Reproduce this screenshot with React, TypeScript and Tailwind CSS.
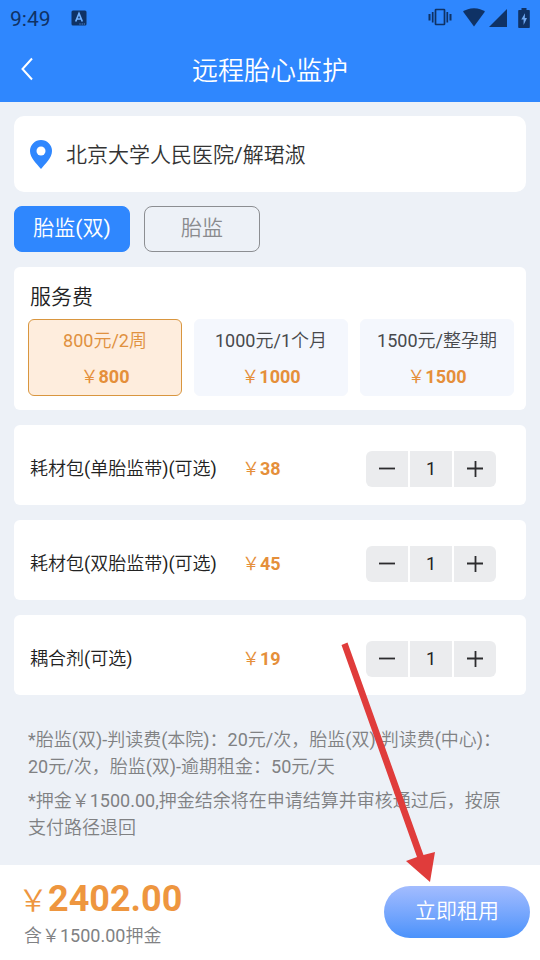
import { useState } from "react";

const PLANS = [
  { id: "two-weeks", name: "800元/2周", price: "800" },
  { id: "one-month", name: "1000元/1个月", price: "1000" },
  { id: "full-term", name: "1500元/整孕期", price: "1500" },
];

const SUPPLIES = [
  { id: "single-belt", name: "耗材包(单胎监带)(可选)", price: "38" },
  { id: "double-belt", name: "耗材包(双胎监带)(可选)", price: "45" },
  { id: "gel", name: "耦合剂(可选)", price: "19" },
];

function StatusBar() {
  return (
    <div className="flex h-9 items-center px-2.5 text-[#0f3265]">
      <span className="pt-1 text-[21px]">9:49</span>
      <svg className="ml-5 size-4" viewBox="0 0 16 16" aria-hidden="true">
        <rect x="0.5" y="0.5" width="15" height="15" rx="1.5" fill="#0f3265" />
        <path d="M4.700 11.500 8 3.500l3.300 8M5.900 9h4.200" fill="none" stroke="#6fb0ff" strokeWidth="1.7" />
        <path d="M8.500 14h1M10.700 14h1M12.800 14h1" stroke="#6fb0ff" strokeWidth="0.9" />
      </svg>
      <div className="ml-auto flex items-center">
        <svg className="h-5 w-6" viewBox="0 0 24 20" fill="none" stroke="#0f3265" aria-hidden="true">
          <rect x="7.500" y="1.500" width="9" height="15" rx="0.500" strokeWidth="1.700" />
          <path d="M4.700 4v10.500M19.300 4v10.500" strokeWidth="1.700" />
          <path d="M1.500 6v6.500M22.500 6v6.500" strokeWidth="2" />
        </svg>
        <svg className="ml-2.5 h-5 w-6" viewBox="0 0 24 20" fill="#0f3265" aria-hidden="true">
          <path d="M1 3.500C3.800 1.500 7.500 0.200 12 0.200s8.200 1.300 11 3.300L12 18.500z" />
        </svg>
        <svg className="ml-0.5 size-5" viewBox="0 0 20 20" fill="#0f3265" aria-hidden="true">
          <path d="M19 1v18H1z" />
        </svg>
        <svg className="ml-2.5 h-5 w-3" viewBox="0 0 12 20" aria-hidden="true">
          <path d="M3.500 0h5v2H11a.8.8 0 0 1 .8.8v16.400a.8.8 0 0 1-.8.8H1a.8.8 0 0 1-.8-.8V2.800A.8.8 0 0 1 1 2h2.500z" fill="#0f3265" />
          <path d="M7 5.200 3.300 11.500h2.300V17L9 10H6.800z" fill="#6fa8f0" />
        </svg>
      </div>
    </div>
  );
}

function Stepper({ label }: { label: string }) {
  const [count, setCount] = useState(1);
  const box = "flex w-[42px] items-center justify-center bg-[#ebecee]";
  return (
    <div className="ml-auto flex h-9 gap-0.5">
      <button className={`${box} rounded-l-md`} aria-label={`减少${label}`} onClick={() => setCount(Math.max(0, count - 1))}>
        <svg className="size-4" viewBox="0 0 16 16" stroke="#2c2c2e" strokeWidth="1.800" aria-hidden="true">
          <path d="M0 7.500h16" />
        </svg>
      </button>
      <input
        className="w-[42px] bg-[#ebecee] text-center text-lg text-[#222] outline-none"
        aria-label={`${label}数量`}
        inputMode="numeric"
        value={count}
        onChange={(e) => setCount(Number(e.target.value) || 0)}
      />
      <button className={`${box} rounded-r-md`} aria-label={`增加${label}`} onClick={() => setCount(count + 1)}>
        <svg className="size-4" viewBox="0 0 16 16" stroke="#2c2c2e" strokeWidth="1.800" aria-hidden="true">
          <path d="M0 7.500h16M8.500 0v16" />
        </svg>
      </button>
    </div>
  );
}

function Price({ value }: { value: string }) {
  return (
    <span className="text-lg text-[#e58f3a]">
      <span>￥</span>
      <span className="font-bold">{value}</span>
    </span>
  );
}

export default function App() {
  const [tab, setTab] = useState("double");
  const [plan, setPlan] = useState("two-weeks");
  const tabOn = "border-[#2f87fe] bg-[#2f87fe] text-white";
  const tabOff = "border-[#8c8e92] text-[#8a8b8e]";
  const planOn = "border-[#d9963f] bg-[#feeddd] text-[#e0913f]";
  const planOff = "border-[#f4f7fd] bg-[#f4f7fd] text-[#48494c]";

  return (
    <div
      lang="zh-CN"
      className="relative flex min-h-screen flex-col overflow-hidden bg-[#edf1f7] font-['Roboto','Noto_Sans_CJK_SC_DemiLight','Noto_Sans_CJK_SC_Light','Noto_Sans_CJK_SC',sans-serif] text-[#333]"
    >
      <header className="bg-[#2f87fe]">
        <StatusBar />
        <div className="grid h-[66px] grid-cols-[54px_1fr_54px] items-center">
          <button className="flex h-full items-center justify-center" aria-label="返回">
            <svg className="h-6 w-3" viewBox="0 0 12 24" fill="none" stroke="#fff" strokeWidth="2" aria-hidden="true">
              <path d="M11 1.500 1.500 12 11 22.500" />
            </svg>
          </button>
          <h1 className="pt-1 text-center text-[26px] text-white">远程胎心监护</h1>
        </div>
      </header>

      <main className="px-3.5 pt-3.5">
        <section className="flex h-[76px] items-center gap-3.5 rounded-[10px] bg-white px-4">
          <svg className="h-[29px] w-[22px]" viewBox="0 0 22 29" aria-hidden="true">
            <path d="M11 0a11 11 0 0 0-11 11c0 7 6.500 12.500 11 18 4.500-5.500 11-11 11-18A11 11 0 0 0 11 0z" fill="#2f87fe" />
            <circle cx="11" cy="11" r="4.500" fill="#fff" />
          </svg>
          <p className="pt-1 text-[21px]">北京大学人民医院/解珺淑</p>
        </section>

        <div className="mt-3.5 flex gap-3.5 text-[21px]" role="tablist">
          <button
            role="tab"
            aria-selected={tab === "double"}
            onClick={() => setTab("double")}
            className={`h-[46px] w-[116px] rounded-lg border ${tab === "double" ? tabOn : tabOff}`}
          >
            胎监(双)
          </button>
          <button
            role="tab"
            aria-selected={tab === "single"}
            onClick={() => setTab("single")}
            className={`h-[46px] w-[116px] rounded-lg border ${tab === "single" ? tabOn : tabOff}`}
          >
            胎监
          </button>
        </div>

        <section className="mt-[15px] rounded-md bg-white pt-4 pr-3 pb-3.5 pl-3.5">
          <h2 className="pl-0.5 text-[21px] leading-7 text-[#222]">服务费</h2>
          <div className="mt-2 grid grid-cols-3 gap-3">
            {PLANS.map((p) => (
              <button
                key={p.id}
                aria-pressed={plan === p.id}
                onClick={() => setPlan(p.id)}
                className={`flex h-[77px] flex-col items-center justify-center gap-2 rounded-md border pt-0.5 ${plan === p.id ? planOn : planOff}`}
              >
                <span className="text-lg">{p.name}</span>
                <Price value={p.price} />
              </button>
            ))}
          </div>
        </section>

        {SUPPLIES.map((s) => (
          <section key={s.id} className="mt-[15px] flex h-20 items-center rounded-md bg-white pt-2 pr-[30px] pl-4">
            <h3 className="w-[212px] text-lg text-[#222]">{s.name}</h3>
            <Price value={s.price} />
            <Stepper label={s.name} />
          </section>
        ))}

        <div className="space-y-[7px] px-3.5 pt-[31px] text-lg leading-[27px] text-[#808183]">
          <p>*胎监(双)-判读费(本院)：20元/次，胎监(双)-判读费(中心)：20元/次，胎监(双)-逾期租金：50元/天</p>
          <p>*押金￥1500.00,押金结余将在申请结算并审核通过后，按原支付路径退回</p>
        </div>
      </main>

      <footer className="mt-auto flex h-[95px] items-center justify-between bg-white pr-2.5 pb-0.5 pl-[18px]">
        <div className="pt-0.5">
          <p className="leading-10 text-[#ee963f]">
            <span className="text-[30px]">￥</span>
            <span className="text-4xl font-bold">2402.00</span>
          </p>
          <p className="pl-1.5 text-lg leading-5 text-[#808183]">含￥1500.00押金</p>
        </div>
        <button className="h-[52px] w-[146px] rounded-full bg-linear-to-b from-[#a3bcfe] to-[#4a92fb] text-[21px] text-white">
          立即租用
        </button>
      </footer>

      {/* Pointer leading to the rent button */}
      <svg
        className="pointer-events-none absolute right-[104px] bottom-[78px] h-[240px] w-[95px]"
        viewBox="0 0 95 240"
        fill="#e03c3b"
        aria-hidden="true"
      >
        <path d="M0.500 3 6.500 0.500 82.500 213 94 210 89 240 65 219 76 215z" />
      </svg>
    </div>
  );
}
